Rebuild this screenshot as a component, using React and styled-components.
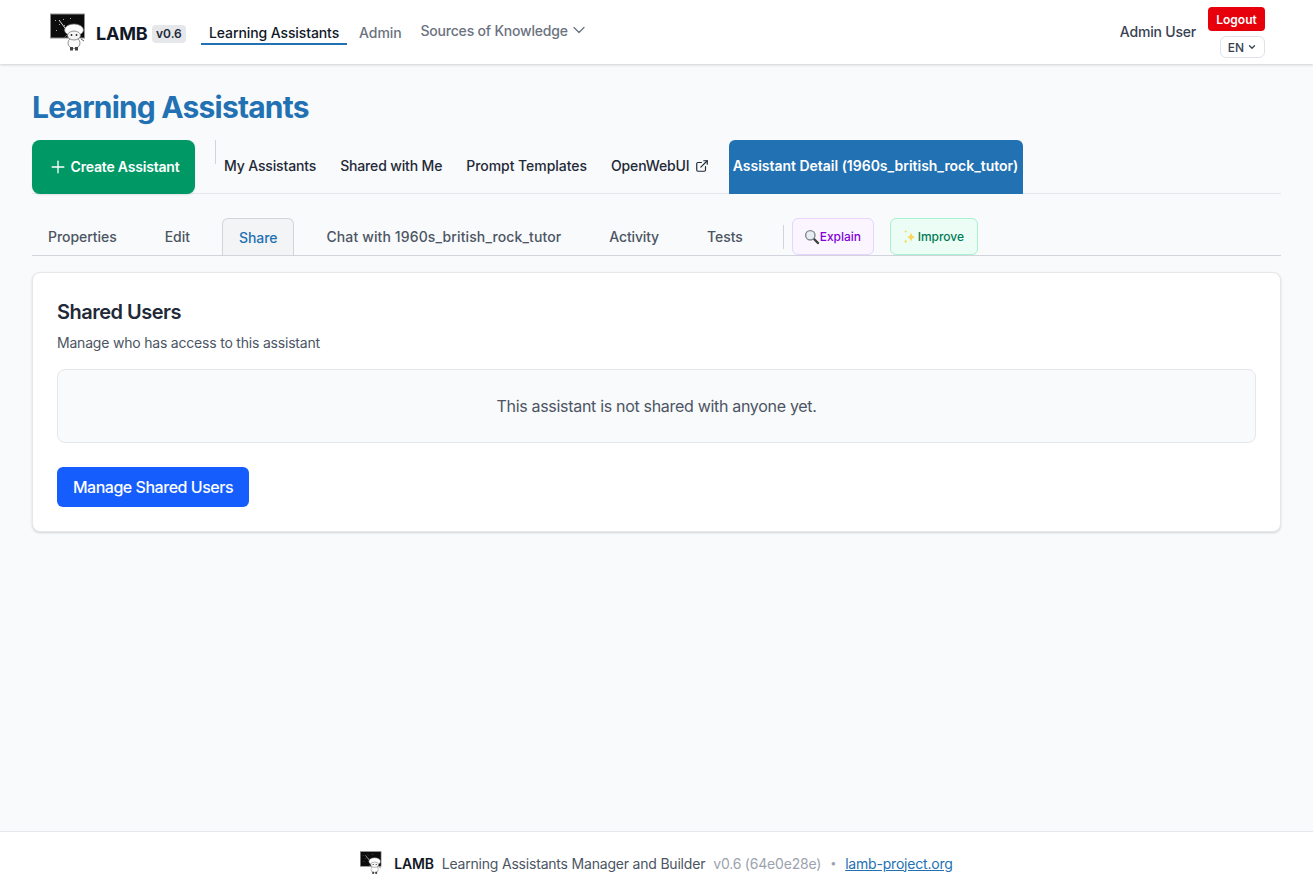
import React from 'react';
import styled, { createGlobalStyle } from 'styled-components';
import { ChevronDown, ExternalLink, Plus } from 'lucide-react';

const GlobalStyle = createGlobalStyle`
  html, body { margin: 0; padding: 0; }
  body {
    font-family: Inter, "Liberation Sans", sans-serif;
    background: #f9fafb;
    color: #111827;
  }
  * { box-sizing: border-box; }
`;

const Page = styled.div`
  min-height: 896px;
  display: flex;
  flex-direction: column;
`;

const Header = styled.header`
  height: 64px;
  background: #fff;
  box-shadow: 0 1px 3px rgba(0, 0, 0, 0.12), 0 1px 2px rgba(0, 0, 0, 0.06);
  display: flex;
  align-items: center;
  justify-content: space-between;
  padding: 0 48px 0 50px;
`;

const HeaderLeft = styled.div`
  display: flex;
  align-items: center;
`;

const Brand = styled.div`
  display: flex;
  align-items: center;
  width: 151px;
`;

const BrandName = styled.span`
  font-size: 18px;
  font-weight: 700;
  letter-spacing: -0.2px;
  color: #111827;
  margin: 2px 4px 0 10px;
`;

const Version = styled.span`
  font-size: 12px;
  font-weight: 600;
  color: #1f2937;
  background: #e5e7eb;
  border-radius: 4px;
  padding: 1px 4.5px;
  line-height: 16px;
  margin-top: 4px;
`;

const TopLink = styled.a`
  font-size: 14px;
  font-weight: 450;
  letter-spacing: -0.1px;
  line-height: 20px;
  padding: 0 8px;
  margin-top: 4px;
  margin-right: 4px;
  color: ${p => (p.$active ? '#111827' : '#6b7280')};
  border-bottom: 2px solid ${p => (p.$active ? '#2271b3' : 'transparent')};
`;

const Dropdown = styled.div`
  display: flex;
  align-items: center;
  gap: 1px;
  margin-left: 7px;
  font-size: 14px;
  font-weight: 450;
  letter-spacing: -0.2px;
  color: #6b7280;
  margin-top: -4px;
`;

const HeaderRight = styled.div`
  display: flex;
  align-items: center;
  gap: 12px;
`;

const UserName = styled.span`
  font-size: 14px;
  font-weight: 450;
  letter-spacing: -0.2px;
  color: #374151;
  margin-top: -2px;
`;

const HeaderActions = styled.div`
  display: flex;
  flex-direction: column;
  align-items: flex-end;
  gap: 5px;
  margin-top: 1px;
`;

const Logout = styled.button`
  width: 57px;
  height: 24px;
  border: 0;
  border-radius: 4px;
  background: #e7000b;
  color: #fff;
  font: 600 12px Inter, sans-serif;
  padding: 0;
`;

const LangButton = styled.button`
  width: 45px;
  height: 22px;
  border: 1px solid #dfe2e8;
  border-radius: 6px;
  background: #fff;
  color: #374151;
  font: 450 12px Inter, sans-serif;
  display: flex;
  align-items: center;
  justify-content: center;
  gap: 3px;
  padding: 0;
`;

const Main = styled.main`
  flex: 1;
  padding: 25px 32px 0;
`;

const Title = styled.h1`
  margin: 0 0 15px;
  font-size: 30px;
  line-height: 36px;
  font-weight: 700;
  letter-spacing: -0.8px;
  color: #2271b3;
`;

const TopTabs = styled.div`
  display: flex;
  align-items: stretch;
  height: 54px;
  border-bottom: 1px solid #e5e7eb;
`;

const CreateButton = styled.button`
  width: 163px;
  margin-bottom: -1px;
  border: 0;
  border-radius: 8px;
  background: #009966;
  color: #fff;
  font: 600 14px Inter, sans-serif;
  letter-spacing: -0.2px;
  display: flex;
  align-items: center;
  justify-content: center;
  gap: 3px;
  padding: 0 0 1px;
  box-shadow: 0 1px 2px rgba(0, 0, 0, 0.1);
`;

const TabDivider = styled.span`
  width: 1px;
  height: 24px;
  background: #d1d5db;
  margin: 0 0 0 20px;
`;

const TopTab = styled.a`
  display: flex;
  align-items: center;
  gap: 5px;
  font-size: 14px;
  font-weight: 450;
  letter-spacing: ${p => p.$tracking ?? -0.15}px;
  color: #1f2937;
  padding: 0 0 2px;
  margin-left: ${p => (p.$first ? '8px' : '24px')};
`;

const DetailTab = styled.a`
  display: flex;
  align-items: center;
  margin: 0 0 -1px 20px;
  width: 294px;
  justify-content: center;
  font-size: 14px;
  font-weight: 600;
  letter-spacing: -0.02px;
  color: #fff;
  background: #2271b3;
  border-radius: 6px 6px 0 0;
  padding: 0 0 3px;
`;

const SubTabs = styled.div`
  display: flex;
  align-items: flex-end;
  height: 38px;
  margin-top: 24px;
  border-bottom: 1px solid #d1d5db;
`;

const SubTab = styled.a`
  height: 37px;
  display: flex;
  align-items: center;
  font-size: 14px;
  font-weight: 450;
  padding: 0 16px;
  margin-right: 16px;
  letter-spacing: ${p => p.$tracking ?? -0.05}px;
  color: #4b5563;
`;

const ActiveSubTab = styled(SubTab)`
  color: #2271b3;
  background: #f3f4f6;
  border: 1px solid #d1d5db;
  border-bottom: 0;
  border-radius: 6px 6px 0 0;
`;

const SubDivider = styled.span`
  align-self: center;
  width: 1px;
  height: 24px;
  background: #d1d5db;
  margin: 0 8px;
`;

const ActionTab = styled.a`
  width: ${p => p.$width}px;
  height: 37px;
  align-self: flex-start;
  display: flex;
  align-items: center;
  font-size: 12px;
  font-weight: 450;
  letter-spacing: -0.05px;
  padding-left: 11px;
  margin-right: 16px;
  border-radius: 6px;
  color: ${p => p.$color};
  background: ${p => p.$bg};
  border: 1px solid ${p => p.$border};
`;

const Card = styled.section`
  margin-top: 16px;
  background: #fff;
  border: 1px solid #e5e7eb;
  border-radius: 8px;
  box-shadow: 0 1px 3px rgba(0, 0, 0, 0.1), 0 1px 2px rgba(0, 0, 0, 0.06);
  padding: 24px;
`;

const CardTitle = styled.h2`
  margin: 0;
  font-size: 20px;
  line-height: 30px;
  font-weight: 600;
  letter-spacing: -0.5px;
  color: #1f2937;
`;

const CardText = styled.p`
  margin: 6px 0 16px;
  font-size: 14px;
  line-height: 20px;
  letter-spacing: -0.2px;
  color: #4b5563;
`;

const EmptyBox = styled.div`
  height: 74px;
  display: flex;
  align-items: center;
  justify-content: center;
  background: #f9fafb;
  border: 1px solid #e5e7eb;
  border-radius: 8px;
  font-size: 16px;
  letter-spacing: -0.31px;
  color: #4b5563;
`;

const ManageButton = styled.button`
  display: block;
  margin-top: 24px;
  width: 192px;
  height: 40px;
  border: 0;
  border-radius: 6px;
  background: #155dfc;
  color: #fff;
  font: 500 16px Inter, sans-serif;
  letter-spacing: -0.47px;
`;

const Footer = styled.footer`
  height: 65px;
  background: #fff;
  border-top: 1px solid #e5e7eb;
  display: flex;
  align-items: center;
  justify-content: center;
  padding-bottom: 2px;
  font-size: 14px;
  letter-spacing: -0.2px;
  color: #4b5563;
`;

const FooterBrand = styled.strong`
  font-weight: 600;
  color: #111827;
  margin: 0 8px 0 12px;
`;

const Muted = styled.span`
  color: #9ca3af;
  margin-left: 8px;
`;

const Dot = styled.span`
  color: #9ca3af;
  font-size: 11px;
  margin: 0 9px;
`;

const FooterLink = styled.a`
  color: #2271b3;
  text-decoration: underline;
`;

const Logo = ({ size }) => (
  <svg width={size} height={size * 38 / 36} viewBox="0 0 36 38" fill="none">
    <rect x="0.5" y="1" width="34" height="24" fill="#0c0c0c" stroke="#8f8f8f" />
    <path d="M5 7l1 1M9 12l1-1M13 6l1 1M6 17l1 1M14 13l1-1M20 5l1 1" stroke="#aaa" />
    <path d="M9 7l9 12" stroke="#ddd" />
    <ellipse cx="24" cy="30" rx="6" ry="5.5" fill="#fff" stroke="#666" strokeWidth="0.7" />
    <path d="M17 22l-3 3M31 26l3 2" stroke="#666" />
    <rect x="20" y="34" width="3" height="3.5" fill="#444" />
    <rect x="25" y="34" width="3" height="3.5" fill="#444" />
    <ellipse cx="24" cy="17" rx="9.500" ry="6" fill="#fff" stroke="#777" strokeWidth="0.7" />
    <ellipse cx="24" cy="22.500" rx="6.500" ry="4.500" fill="#f4f4f4" stroke="#666" strokeWidth="0.7" />
    <circle cx="21.500" cy="22" r="0.9" fill="#222" />
    <circle cx="26.500" cy="22" r="0.9" fill="#222" />
  </svg>
);

const Magnifier = () => (
  <svg width="16" height="16" viewBox="0 0 16 16" fill="none">
    <path d="M9.500 9.500L14 14" stroke="#3d3d3d" strokeWidth="2.4" strokeLinecap="round" />
    <circle cx="6.300" cy="6.300" r="4.700" fill="#e6eef4" stroke="#80888e" strokeWidth="1.400" />
  </svg>
);

const Sparkles = () => (
  <svg width="16" height="16" viewBox="0 0 15 15" fill="#f9d65c">
    <path d="M8.500 3c.6 3 1.600 4 4.500 4.600-2.900.6-3.900 1.600-4.500 4.900-.6-3.300-1.600-4.300-4.500-4.900C6.900 7 7.900 6 8.500 3z" />
    <path d="M3.500 9.500c.3 1.300.8 1.800 2 2.100-1.200.3-1.700.8-2 2.100-.3-1.300-.8-1.800-2-2.100 1.200-.3 1.700-.8 2-2.100z" />
    <path d="M3.500 1c.2.9.5 1.200 1.400 1.400-.9.2-1.200.5-1.400 1.400-.2-.9-.5-1.200-1.400-1.400.9-.2 1.200-.5 1.400-1.400z" />
  </svg>
);

export default function App() {
  return (
    <Page>
      <GlobalStyle />
      <Header>
        <HeaderLeft>
          <Brand>
            <Logo size={36} />
            <BrandName>LAMB</BrandName>
            <Version>v0.6</Version>
          </Brand>
          <TopLink $active>Learning Assistants</TopLink>
          <TopLink>Admin</TopLink>
          <Dropdown>
            Sources of Knowledge
            <ChevronDown size={20} strokeWidth={1.5} />
          </Dropdown>
        </HeaderLeft>
        <HeaderRight>
          <UserName>Admin User</UserName>
          <HeaderActions>
            <Logout>Logout</Logout>
            <LangButton>EN <ChevronDown size={10} strokeWidth={3} /></LangButton>
          </HeaderActions>
        </HeaderRight>
      </Header>
      <Main>
        <Title>Learning Assistants</Title>
        <TopTabs>
          <CreateButton><Plus size={20} strokeWidth={1.6} /> Create Assistant</CreateButton>
          <TabDivider />
          <TopTab $first>My Assistants</TopTab>
          <TopTab>Shared with Me</TopTab>
          <TopTab $tracking={-0.05}>Prompt Templates</TopTab>
          <TopTab $tracking={-0.12}>OpenWebUI <ExternalLink size={14} /></TopTab>
          <DetailTab>Assistant Detail (1960s_british_rock_tutor)</DetailTab>
        </TopTabs>
        <SubTabs>
          <SubTab>Properties</SubTab>
          <SubTab>Edit</SubTab>
          <ActiveSubTab>Share</ActiveSubTab>
          <SubTab $tracking={0.12}>Chat with 1960s_british_rock_tutor</SubTab>
          <SubTab $tracking={-0.15}>Activity</SubTab>
          <SubTab>Tests</SubTab>
          <SubDivider />
          <ActionTab $width={82} $color="#8200db" $bg="#faf5ff" $border="#e9d4ff"><Magnifier />Explain</ActionTab>
          <ActionTab $width={88} $color="#007a55" $bg="#ecfdf5" $border="#a7f3d0"><Sparkles />Improve</ActionTab>
        </SubTabs>
        <Card>
          <CardTitle>Shared Users</CardTitle>
          <CardText>Manage who has access to this assistant</CardText>
          <EmptyBox>This assistant is not shared with anyone yet.</EmptyBox>
          <ManageButton>Manage Shared Users</ManageButton>
        </Card>
      </Main>
      <Footer>
        <Logo size={22} />
        <FooterBrand>LAMB</FooterBrand>
        Learning Assistants Manager and Builder
        <Muted>v0.6 (64e0e28e)</Muted>
        <Dot>•</Dot>
        <FooterLink>lamb-project.org</FooterLink>
      </Footer>
    </Page>
  );
}
